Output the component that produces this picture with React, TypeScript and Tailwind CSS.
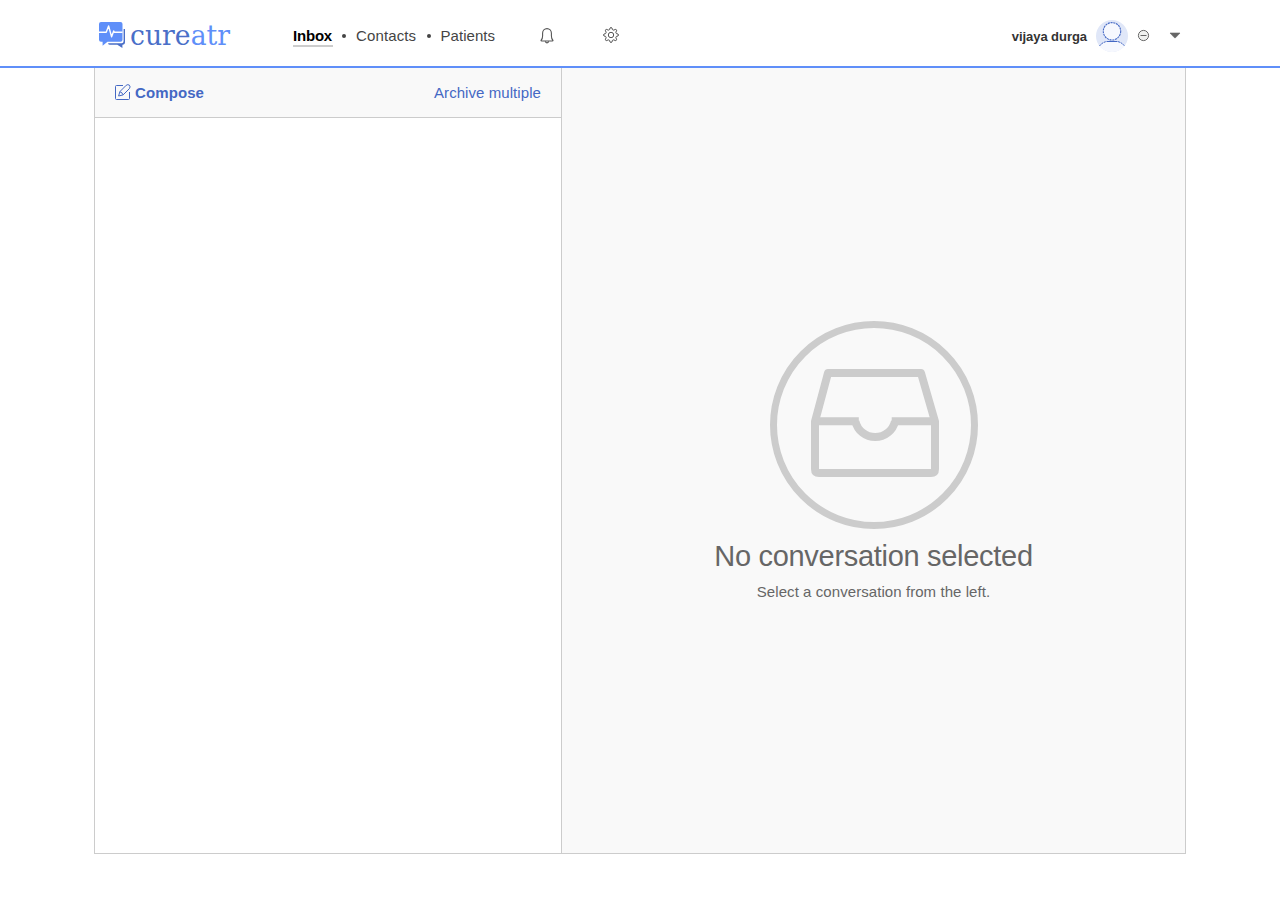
import React from 'react';

function Logo() {
  return (
    <svg width="136" height="34" viewBox="0 0 136 34" role="img" aria-label="cureatr">
      <path d="M26 11H27V24.6Q27 26.7 25 26.7H24.4V30L19.3 26.7H12Q10.3 26.7 10 25.2H23.5Q25.6 25.2 25.6 23V11Z" fill="#4a6fc8" />
      <path d="M3 4H22.5Q24.5 4 24.5 6V21.7Q24.5 23.7 22.5 23.7H9.5L4.6 27.7V23.7H3Q1 23.7 1 21.7V6Q1 4 3 4Z" fill="#5f8ff9" />
      <path d="M1 14.3H8.2L10.6 8L13.6 18.8L15.7 13L16.3 14.3H24.5" fill="none" stroke="#fff" strokeWidth="1.4" strokeLinejoin="round" />
      <text x="32" y="26.5" fontSize="27" textLength="100" lengthAdjust="spacingAndGlyphs" fill="#4a6fc8" fontFamily="'DejaVu Serif', serif">
        cure<tspan fill="#5f8ff9">atr</tspan>
      </text>
    </svg>
  );
}

function Bell() {
  return (
    <svg width="16" height="18" viewBox="0 0 16 18" fill="none" stroke="#555" strokeWidth="1.1">
      <path d="M2 13.5Q3.6 11.8 3.6 9V6.2A4.4 4.6 0 0 1 12.4 6.2V9Q12.4 11.8 14 13.5Q14 14 13.2 14H2.8Q2 14 2 13.5Z" />
      <path d="M6.4 14.3A1.6 1.6 0 0 0 9.6 14.3" />
    </svg>
  );
}

function Gear() {
  return (
    <svg width="18" height="18" viewBox="0 0 18 18" fill="none" stroke="#555" strokeLinejoin="round">
      <circle cx="9" cy="9" r="2.7" />
      <path d="M7.6 3.6Q7.7 1.5 9 1.5T10.4 3.6L11.8 4.2Q13.4 2.8 14.3 3.7T13.8 6.2L14.4 7.6Q16.5 7.7 16.5 9T14.4 10.4L13.8 11.8Q15.2 13.4 14.3 14.3T11.8 13.8L10.4 14.4Q10.3 16.5 9 16.5T7.6 14.4L6.2 13.8Q4.6 15.2 3.7 14.3T4.2 11.8L3.6 10.4Q1.5 10.3 1.5 9T3.6 7.6L4.2 6.2Q2.8 4.6 3.7 3.7T6.2 4.2Z" />
    </svg>
  );
}

function Avatar() {
  return (
    <svg width="32" height="32" viewBox="0 0 32 32" fill="none">
      <circle cx="16" cy="16" r="16" fill="#e0e7f8" />
      <path d="M3.5 26C5 23.5 8 22 11 21.3H21C24 22 27 23.5 28.5 26A16 16 0 0 1 3.5 26Z" fill="#f6f8fe" />
      <circle cx="16" cy="11.3" r="8.7" fill="#f6f8fe" stroke="#4468c4" strokeWidth="1.1" strokeDasharray="2.1 0.7" />
      <path d="M3.5 26C5 23.7 7.5 22.3 10 21.6M22 21.6C24.5 22.3 27 23.7 28.5 26" stroke="#4468c4" strokeDasharray="2.1 0.7" />
      <path d="M10.5 21.5H21.5" stroke="#4468c4" />
    </svg>
  );
}

function InboxArt() {
  return (
    <svg width="208" height="208" viewBox="0 0 208 208" fill="none" stroke="#ccc">
      <circle cx="104" cy="104" r="100.5" strokeWidth="7" />
      <g strokeWidth="8" strokeLinejoin="round">
        <path d="M45 100.5L58 52H151L165 100.5V148Q165 152 161 152H49Q45 152 45 148Z" />
        <path d="M45 100.3H88.8M121.7 100.3H165" />
        <path d="M85.4 100.3A20.3 20.3 0 0 0 125 100.3" />
      </g>
    </svg>
  );
}

export default function App() {
  return (
    <div className="h-[922px] overflow-hidden bg-white font-['Liberation_Sans',Arial,sans-serif] text-[15px] leading-5 whitespace-nowrap text-[#444]">
      <header className="h-[68px] border-b-2 border-[#5f8ff9]">
        <div className="mx-auto flex h-[66px] w-[1092px] items-start">
          <a className="mt-[18px] ml-1 w-[195px]"><Logo /></a>
          <nav className="mt-[26px] flex items-start">
            <a className="h-[21px] w-10 border-b-2 border-[#ccc] font-bold tracking-[-0.2px] text-black">Inbox</a>
            <span className="mt-2 ml-[9px] size-1 rounded-full bg-[#444]" />
            <a className="ml-[10px] w-[61px] tracking-[0.12px]">Contacts</a>
            <span className="mt-2 ml-[10px] size-1 rounded-full bg-[#444]" />
            <a className="ml-[9.5px] w-[55px] tracking-[0.05px]">Patients</a>
          </nav>
          <button className="mt-[27px] ml-[43.5px]"><Bell /></button>
          <button className="mt-[26px] ml-[47px]"><Gear /></button>
          <div className="ml-auto flex">
            <span className="mt-[27px] mr-[9px] text-[13px] font-bold tracking-[-0.05px] text-[#333]">vijaya durga</span>
            <span className="mt-5"><Avatar /></span>
            <svg className="mt-[29px] ml-[9px]" width="13" height="13" viewBox="0 0 13 13" stroke="#666" fill="#f0f1ef">
              <circle cx="6.5" cy="6.5" r="5.1" />
              <path d="M3.5 6.5H9.5" />
            </svg>
            <svg className="mt-8 mr-[5px] ml-[19px]" width="12" height="7" viewBox="0 0 12 7">
              <path d="M1 1H11L6.7 5.6Q6 6.2 5.3 5.6Z" fill="#666" stroke="#666" strokeWidth=".6" strokeLinejoin="round" />
            </svg>
          </div>
        </div>
      </header>
      <main className="mx-auto flex h-[786px] w-[1092px] border-x border-b border-[#ccc]">
        <section className="w-[467px] border-r border-[#ccc]">
          <div className="flex h-[50px] items-center justify-between border-b border-[#ccc] bg-[#f9f9f9] px-5 text-[#4468c4]">
            <a className="flex items-center gap-1 font-bold tracking-[0.1px]">
              <svg width="16" height="17" viewBox="0 0 16 17" fill="none" stroke="currentColor">
                <path d="M8 1.5H1.5Q.5 1.5 .5 2.5V14.5Q.5 15.5 1.5 15.5H13.5Q14.5 15.5 14.5 14.5V8" />
                <path d="M3.6 12L4.9 7.6L11.2 1.3Q12.8 0 14.4 1.2Q15.8 2.8 14.4 4.6L8.1 10.9ZM5 7.8Q7.4 8.4 7.9 10.7" strokeLinejoin="round" />
              </svg>
              Compose
            </a>
            <a className="tracking-[0.07px]">Archive multiple</a>
          </div>
        </section>
        <section className="flex flex-1 flex-col items-center bg-[#f9f9f9] pt-[253px] text-[#666]">
          <InboxArt />
          <h1 className="mt-[9px] text-[29px] leading-9 tracking-[-0.3px]">No conversation selected</h1>
          <p className="mt-2 tracking-[0.07px]">Select a conversation from the left.</p>
        </section>
      </main>
    </div>
  );
}
